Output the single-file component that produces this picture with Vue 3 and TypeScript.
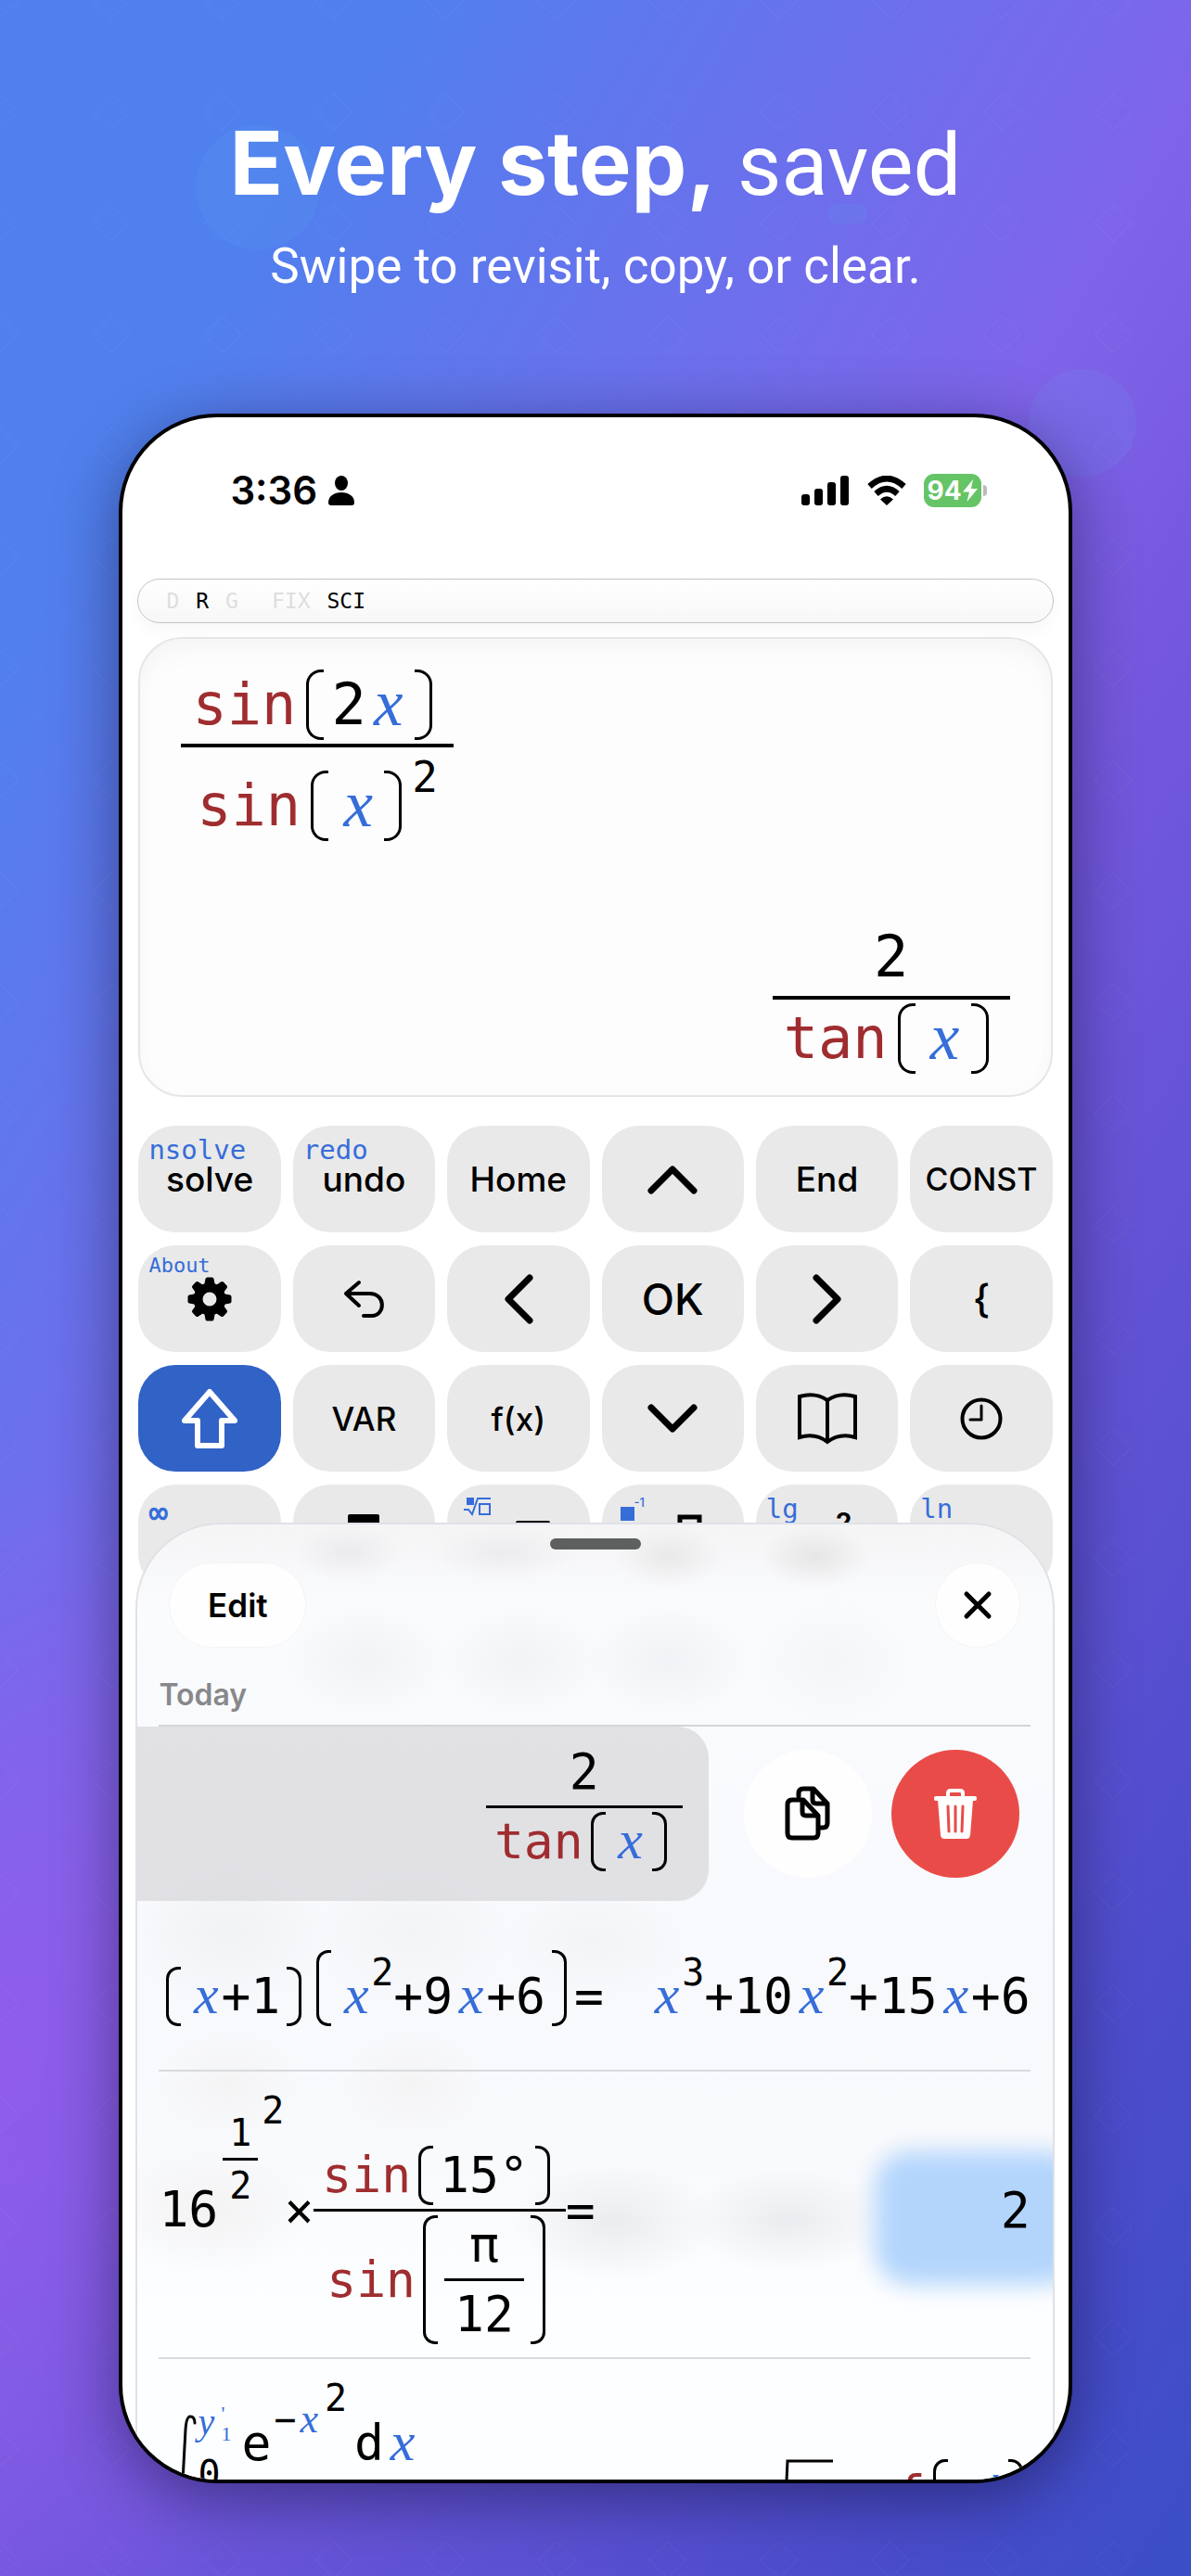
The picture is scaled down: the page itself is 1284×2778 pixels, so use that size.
<script setup lang="ts">
interface Key {
  label?: string
  icon?: string
  shift?: string
  shiftIcon?: string
  size?: 'sm' | 'md' | 'lg' | 'brace'
  shiftStyle?: 'small' | 'strong'
  active?: boolean
  name: string
}

const keys: Key[] = [
  { name: 'solve', label: 'solve', shift: 'nsolve' },
  { name: 'undo', label: 'undo', shift: 'redo' },
  { name: 'Home', label: 'Home' },
  { name: 'Up', icon: 'up' },
  { name: 'End', label: 'End' },
  { name: 'Constants', label: 'CONST', size: 'sm' },
  { name: 'Settings', icon: 'gear', shift: 'About', shiftStyle: 'small' },
  { name: 'Back', icon: 'back' },
  { name: 'Left', icon: 'left' },
  { name: 'OK', label: 'OK', size: 'lg' },
  { name: 'Right', icon: 'right' },
  { name: 'Brace', label: '{', size: 'brace' },
  { name: 'Shift', icon: 'shift', active: true },
  { name: 'Variables', label: 'VAR', size: 'md' },
  { name: 'Function', label: 'f(x)', size: 'md' },
  { name: 'Down', icon: 'down' },
  { name: 'Catalog', icon: 'book' },
  { name: 'History', icon: 'clock' },
  { name: 'Infinity', shift: '∞', shiftStyle: 'strong' },
  { name: 'Fraction', icon: 'fraction' },
  { name: 'Root', icon: 'root', shiftIcon: 'nroot' },
  { name: 'Power', icon: 'power', shiftIcon: 'inverse' },
  { name: 'Square', icon: 'square', shift: 'lg' },
  { name: 'Logarithm', shift: 'ln' },
]
</script>

<template>
  <main class="page">
    <svg class="pattern" aria-hidden="true">
      <defs>
        <pattern id="diamonds" width="120" height="120" patternUnits="userSpaceOnUse">
          <path d="M120 101L140 121L120 141M0 101L20 121M0 -19L20 1L0 20M120 -19L100 1L120 20M120 101L100 121" fill="none" stroke="#fff" stroke-opacity=".05" />
        </pattern>
      </defs>
      <rect width="100%" height="100%" fill="url(#diamonds)" />
      <circle cx="278" cy="202" r="67" fill="#5fa0f0" fill-opacity=".16" />
      <circle cx="1167" cy="456" r="58" fill="#6f90f0" fill-opacity=".18" />
      <rect x="893" y="220" width="42" height="21" rx="8" fill="#5f90f0" fill-opacity=".2" />
    </svg>

    <header class="hero">
      <h1><b>Every step,</b> saved</h1>
      <p>Swipe to revisit, copy, or clear.</p>
    </header>

    <section class="phone">
      <div class="status">
        <div class="time">
          <span>3:36</span>
          <svg width="30" height="32" viewBox="0 0 30 32"><ellipse cx="15" cy="8" rx="7" ry="8" /><path d="M1 29C1 22 7 18 15 18S29 22 29 29Q29 32 26 32H4Q1 32 1 29Z" /></svg>
        </div>
        <div class="signals">
          <svg width="52" height="32" viewBox="0 0 52 32"><rect x="0" y="20" width="9" height="12" rx="3" /><rect x="14" y="14" width="9" height="18" rx="3" /><rect x="28" y="7" width="9" height="25" rx="3" /><rect x="42" y="0" width="9" height="32" rx="3" /></svg>
          <svg width="44" height="32" viewBox="0 0 44 32"><path d="M3.500 11.500Q22 -5.500 40.500 11.500" fill="none" stroke="#000" stroke-width="6.500" /><path d="M10.500 19.500Q22 9 33.500 19.500" fill="none" stroke="#000" stroke-width="6.500" /><path d="M22 32L15 25.500Q22 19 29 25.500Z" /></svg>
          <div class="battery">
            <span>94</span>
            <svg width="16" height="24" viewBox="0 0 16 24"><path d="M11 0L0 13.500H7L4.500 24L16 10H9Z" fill="#fff" /></svg>
          </div>
        </div>
      </div>

      <div class="modes">
        <span class="off">D</span><span>R</span><span class="off">G</span><span class="off wide">FIX</span><span>SCI</span>
      </div>

      <div class="display">
        <div class="m big">
          <div class="frac">
            <div class="num row"><span class="fn">sin</span><i class="lp"></i><span>2</span><var>x</var><i class="rp"></i></div>
            <div class="bar"></div>
            <div class="den row"><span class="fn">sin</span><div class="row"><i class="lp"></i><var>x</var><i class="rp"></i></div><span class="sup">2</span></div>
          </div>
        </div>
        <div class="m big result">
          <div class="frac">
            <div class="num row"><span>2</span></div>
            <div class="bar"></div>
            <div class="den row"><span class="fn">tan</span><i class="lp"></i><var>x</var><i class="rp"></i></div>
          </div>
        </div>
      </div>

      <div class="keypad">
        <button v-for="k in keys" :key="k.name" type="button" class="key" :class="[k.size, { active: k.active }]" :aria-label="k.name">
          <span v-if="k.shift" class="shift" :class="k.shiftStyle">{{ k.shift }}</span>
          <svg v-if="k.shiftIcon === 'nroot'" class="shift-icon" width="30" height="20" viewBox="0 0 30 20"><rect x="3" y="0" width="8" height="8" fill="#366dd9" /><path d="M0 13H5L9 18L15 1H29" fill="none" stroke="#366dd9" stroke-width="2" /><rect x="17" y="7" width="11" height="11" fill="none" stroke="#366dd9" stroke-width="2" /></svg>
          <span v-if="k.shiftIcon === 'inverse'" class="inverse"><i></i><sup>-1</sup></span>
          <span v-if="k.label">{{ k.label }}</span>
          <svg v-if="k.icon === 'up'" width="54" height="32" viewBox="0 0 54 32"><path d="M4 28L27 5L50 28" class="ln w7" /></svg>
          <svg v-if="k.icon === 'down'" width="54" height="32" viewBox="0 0 54 32"><path d="M4 4L27 27L50 4" class="ln w7" /></svg>
          <svg v-if="k.icon === 'left'" width="32" height="54" viewBox="0 0 32 54"><path d="M28 4L5 27L28 50" class="ln w7" /></svg>
          <svg v-if="k.icon === 'right'" width="32" height="54" viewBox="0 0 32 54"><path d="M4 4L27 27L4 50" class="ln w7" /></svg>
          <svg v-if="k.icon === 'back'" width="44" height="42" viewBox="0 0 44 42"><path d="M17 3L3 15L17 28M3 15H28C47 15 45 39 31 39H22" class="ln w4" /></svg>
          <svg v-if="k.icon === 'gear'" width="48" height="48" viewBox="-24 -24 48 48">
            <path v-for="a in 8" :key="a" d="M-6 -14L-4.500 -22Q-4 -23.500 -2.500 -23.500H2.500Q4 -23.500 4.500 -22L6 -14Z" :transform="`rotate(${a * 45})`" />
            <circle r="12.500" fill="none" stroke="#000" stroke-width="10" />
          </svg>
          <svg v-if="k.icon === 'shift'" width="60" height="66" viewBox="0 0 60 66"><path d="M30 4L57 35H43V62H17V35H3Z" fill="none" stroke="#fff" stroke-width="6" stroke-linejoin="round" /></svg>
          <svg v-if="k.icon === 'book'" width="66" height="56" viewBox="0 0 66 56"><path d="M33 8Q20 -1 3 4V48Q20 43 33 53Q46 43 63 48V4Q46 -1 33 8V53" fill="none" stroke="#000" stroke-width="4" /></svg>
          <svg v-if="k.icon === 'clock'" width="46" height="46" viewBox="0 0 46 46"><circle cx="23" cy="23" r="20.500" fill="none" stroke="#000" stroke-width="4" /><path d="M23 9V24H11" class="ln w3" /></svg>
          <svg v-if="k.icon === 'fraction'" width="34" height="51" viewBox="0 0 34 51"><rect x="0" y="0" width="34" height="20" rx="2" /><path d="M0 26H34" stroke="#000" stroke-width="4" /><rect x="2" y="33" width="30" height="16" fill="none" stroke="#000" stroke-width="4" /></svg>
          <svg v-if="k.icon === 'root'" class="root" width="60" height="40" viewBox="0 0 60 40"><path d="M2 24L10 24L17 37L25 3H58" class="ln w4" /></svg>
          <svg v-if="k.icon === 'power'" width="70" height="54" viewBox="0 0 70 54"><rect x="3" y="22" width="30" height="30" /><rect x="43" y="4" width="21" height="22" fill="none" stroke="#000" stroke-width="5" /></svg>
          <span v-if="k.icon === 'square'" class="sq"><i></i><sup>2</sup></span>
        </button>
      </div>

      <section class="sheet" aria-label="History">
        <div class="glow" aria-hidden="true"></div>
        <div class="grabber"></div>
        <div class="tools">
          <button type="button" class="edit">Edit</button>
          <button type="button" class="close" aria-label="Close"><svg width="32" height="32" viewBox="0 0 32 32"><path d="M4 4L28 28M28 4L4 28" class="ln w5" /></svg></button>
        </div>
        <h2>Today</h2>

        <div class="swiped">
          <div class="m card">
            <div class="frac">
              <div class="num row"><span>2</span></div>
              <div class="bar"></div>
              <div class="den row"><span class="fn">tan</span><i class="lp"></i><var>x</var><i class="rp"></i></div>
            </div>
          </div>
          <button type="button" class="round copy" aria-label="Copy">
            <svg width="50" height="60" viewBox="0 0 50 60"><path d="M15 11V8Q15 3 20 3H31L46 19V40Q46 45 41 45H38M30 3V15Q30 19 34 19H46" class="ln w5" /><path d="M8 15H20L36 32V51Q36 56 31 56H8Q3 56 3 51V20Q3 15 8 15ZM19 15V28Q19 32 23 32H36" class="ln w5" /></svg>
          </button>
          <button type="button" class="round trash" aria-label="Delete">
            <svg width="48" height="56" viewBox="0 0 48 56"><path d="M16 10V6Q16 3 19 3H29Q32 3 32 6V10" fill="none" stroke="#fff" stroke-width="4" /><rect x="1" y="9" width="46" height="5" rx="2" fill="#fff" /><path d="M5 13H43L40 51Q39.500 55 36 55H12Q8.500 55 8 51Z" fill="#fff" /><path d="M16 20L17 47M24 20V47M32 20L31 47" stroke="#e94c48" stroke-width="3" stroke-linecap="round" fill="none" /></svg>
          </button>
        </div>

        <div class="m entry poly">
          <div class="row">
            <div class="row"><i class="lp"></i><var>x</var><span>+1</span><i class="rp"></i></div>
            <div class="row"><i class="lp"></i><var>x</var><span class="sup">2</span><span>+9</span><var>x</var><span>+6</span><i class="rp"></i></div>
            <span>=</span>
          </div>
          <div class="row"><var>x</var><span class="sup">3</span><span>+10</span><var>x</var><span class="sup">2</span><span>+15</span><var>x</var><span>+6</span></div>
        </div>

        <div class="m entry trig">
          <div class="row mid">
            <div class="power">
              <span>16</span>
              <div class="exp">
                <div class="frac tiny"><div class="num">1</div><div class="bar"></div><div class="den">2</div></div>
                <span class="top">2</span>
              </div>
            </div>
            <span>×</span>
            <div class="frac">
              <div class="num row"><span class="fn">sin</span><i class="lp"></i><span>15°</span><i class="rp"></i></div>
              <div class="bar"></div>
              <div class="den row mid"><span class="fn">sin</span><i class="lp"></i><div class="frac inner"><div class="num">π</div><div class="bar"></div><div class="den">12</div></div><i class="rp"></i></div>
            </div>
            <span>=</span>
          </div>
          <div class="row"><span>2</span></div>
        </div>

        <div class="m entry integral">
          <div class="row top-row">
            <svg class="int" width="28" height="124" viewBox="0 0 28 124"><path d="M25 9Q25 2 20 2Q16 2 15 16L11 90Q9 120 2 120" class="ln w3" /></svg>
            <div class="bounds"><span class="ub"><em>y</em><span class="marks"><small>'</small><small>1</small></span></span><span>0</span></div>
            <span class="drop">e</span>
            <span class="expo">−<em>x</em></span><span class="expo2">2</span>
            <span class="drop">d</span><var class="drop">x</var>
          </div>
          <div class="row erf">
            <svg width="70" height="70" viewBox="0 0 70 70"><path d="M2 45L8 42L14 66L17 2H66" fill="none" stroke="#000" stroke-width="3" /></svg>
            <span class="fn">erf</span><i class="lp"></i><var>y'</var><i class="rp"></i>
          </div>
        </div>
      </section>
    </section>
  </main>
</template>

<style>
body { margin: 0; }
</style>

<style scoped>
* { box-sizing: border-box; }
.page {
  position: relative;
  display: flex;
  flex-direction: column;
  height: 100vh;
  min-height: 1800px;
  padding: 0 10% 100px;
  overflow: hidden;
  color: #000;
  font-family: Inter, "Liberation Sans", sans-serif;
  background:
    radial-gradient(420px 640px at 0 80%, rgba(146, 91, 234, .85), rgba(146, 91, 234, 0)),
    linear-gradient(121deg, #5080ee 0%, #5080ee 14%, #7f64ea 46%, #7558de 56%, #4a4ccb 88%, #3b4ec8 100%);
}
.pattern { position: absolute; inset: 0; width: 100%; height: 100%; }
.hero { position: relative; color: #fff; text-align: center; height: 446px; padding-top: 120px; flex: none; }
h1 { margin: 0; font: 400 92px/112px Roboto, sans-serif; white-space: nowrap; }
h1 b { font: 700 95px/112px Inter, sans-serif; }
.hero p { margin: 16px 0 0; font: 400 53px/72px Roboto, sans-serif; white-space: nowrap; }

.phone {
  position: relative;
  flex: 1;
  min-height: 0;
  overflow: hidden;
  border: 4px solid #000;
  border-radius: 106px;
  background: #fff;
  box-shadow: 0 16px 70px rgba(0, 0, 20, .42);
  padding: 0 16px 0 14px;
}
.status { display: flex; justify-content: space-between; align-items: center; height: 158px; padding: 0 78px 0 102px; }
.time { display: flex; align-items: center; gap: 11px; font-size: 42px; line-height: 52px; font-weight: 600; }
.signals { display: flex; align-items: center; gap: 18px; }
.battery { position: relative; display: flex; align-items: center; justify-content: center; gap: 1px; width: 62px; height: 36px; border-radius: 11px; background: #65c466; color: #fff; font-size: 28px; line-height: 36px; font-weight: 700; }
.battery::after { content: ""; position: absolute; left: 64px; top: 12px; width: 4px; height: 12px; border-radius: 0 4px 4px 0; background: #bbb; }

.modes {
  display: flex;
  align-items: center;
  gap: 18px;
  height: 48px;
  margin: 16px 0 0 2px;
  padding-left: 30px;
  border: 1px solid #c4c4c4;
  border-radius: 24px;
  background: linear-gradient(#fff, #f7f7f7);
  box-shadow: 0 8px 18px rgba(0, 0, 0, .03);
  font: 23px/30px "DejaVu Sans Mono", monospace;
}
.modes .off { color: #dedede; }
.modes .wide { margin-left: 18px; }

.display {
  display: flex;
  flex-direction: column;
  justify-content: space-between;
  height: 496px;
  margin: 15px 1px 0 3px;
  padding: 33px 44px 23px;
  border: 2px solid #e6e6e6;
  border-radius: 48px;
  background: #fdfdfd;
  box-shadow: inset 0 18px 36px -12px rgba(0, 0, 0, .04), inset 0 0 26px rgba(0, 0, 0, .015);
}
.result { align-self: flex-end; }

.m {
  --fs: 53px; --lh: 64px; --vfs: 60px; --vlh: 68px; --pw: 16px; --out: 8px; --in: 7px; --x: 36px; --bar: 3px; --pad: 9px; --r: 13px;
  --sfs: 40px; --slh: 48px; --sm: 34px;
  display: flex;
  font-family: "DejaVu Sans Mono", monospace;
  font-size: var(--fs);
  line-height: var(--lh);
  white-space: nowrap;
}
.big { --fs: 62px; --lh: 76px; --vfs: 71px; --vlh: 80px; --pw: 19px; --out: 11px; --in: 8px; --x: 44px; --bar: 4px; --pad: 12px; --r: 16px; --sfs: 46px; --slh: 56px; --sm: 41px; }
.row { display: flex; align-items: flex-end; }
.row.mid { align-items: center; }
.fn { color: #9f2d30; }
.m var, .m em { color: #366dd9; font-family: "Liberation Serif", serif; font-style: italic; }
.m var { width: var(--x); margin-top: -4px; padding-left: 4px; font-size: var(--vfs); line-height: var(--vlh); text-align: center; }
.lp, .rp { align-self: stretch; flex: none; width: var(--pw); min-height: var(--lh); border: 3px solid #000; }
.lp { border-right: 0; border-radius: var(--r) 0 0 var(--r); margin: 0 var(--in) 0 var(--out); }
.rp { border-left: 0; border-radius: 0 var(--r) var(--r) 0; margin: 0 var(--out) 0 var(--in); }
.frac { display: grid; grid-template-rows: 1fr auto 1fr; justify-items: center; }
.big .frac { grid-template-rows: auto auto auto; }
.num { align-self: end; }
.frac > .row { padding: 0 var(--pad); }
.frac > .bar { justify-self: stretch; height: var(--bar); margin: 4px 0; background: #000; }
.sup { font-size: var(--sfs); line-height: var(--slh); margin-bottom: var(--sm); }

.keypad { display: grid; grid-template-columns: repeat(6, 1fr); gap: 14px 13px; margin: 31px 1px 0 3px; }
.key {
  position: relative;
  display: flex;
  align-items: center;
  justify-content: center;
  height: 115px;
  padding: 0;
  border: 0;
  border-radius: 40px;
  background: #e9e9e9;
  color: #000;
  font: 500 37px/44px Inter, sans-serif;
}
.key.sm { font-size: 34px; }
.key.md { font-size: 35px; }
.key.lg { font-size: 46px; }
.key.brace { font-size: 42px; }
.key.active { background: #3162c6; }
.shift { position: absolute; left: 11px; top: 8px; color: #366dd9; font: 29px/36px "DejaVu Sans Mono", monospace; }
.shift.small { font-size: 22px; line-height: 28px; }
.shift.strong { top: 12px; font-size: 34px; font-weight: 700; }
.shift-icon { position: absolute; left: 18px; top: 14px; }
.inverse { position: absolute; left: 20px; top: 13px; display: flex; align-items: flex-end; height: 26px; }
.inverse i { width: 15px; height: 15px; background: #366dd9; }
.inverse sup { align-self: flex-start; color: #366dd9; font-size: 13px; line-height: 12px; }
.root { margin-left: 8px; }
.sq { display: flex; height: 62px; align-items: flex-end; gap: 8px; }
.sq i { width: 28px; height: 30px; background: #000; }
.sq sup { align-self: flex-start; font-size: 28px; line-height: 28px; font-weight: 700; }
.ln { fill: none; stroke: #000; stroke-linecap: round; stroke-linejoin: round; }
.w7 { stroke-width: 7px; }
.w5 { stroke-width: 5px; }
.w4 { stroke-width: 4px; }
.w3 { stroke-width: 3px; }

.sheet {
  position: relative;
  margin: -74px -1px 0 0;
  height: 1300px;
  overflow: hidden;
  border: 2px solid #dfe2e6;
  border-radius: 92px 92px 0 0;
  background:
    radial-gradient(60px 30px at 23% 30px, #ebebed, transparent),
    radial-gradient(80px 30px at 40% 30px, #ececee, transparent),
    radial-gradient(60px 34px at 58% 34px, #e9e9ea, transparent),
    radial-gradient(60px 34px at 74% 34px, #e6e6e7, transparent),
    radial-gradient(90px 60px at 25% 146px, #f2f3f5, transparent),
    radial-gradient(90px 60px at 42% 146px, #f2f3f5, transparent),
    radial-gradient(90px 60px at 58% 146px, #f1f2f5, transparent),
    radial-gradient(90px 70px at 76% 146px, #f5f6f8, transparent),
    radial-gradient(110px 80px at 10% 440px, #f1f2f3, transparent),
    radial-gradient(110px 80px at 30% 440px, #f3f4f5, transparent),
    radial-gradient(100px 60px at 50% 450px, #f3f4f5, transparent),
    radial-gradient(80px 60px at 10% 604px, #f4f4f5, transparent),
    radial-gradient(80px 60px at 30% 604px, #f4f4f5, transparent),
    radial-gradient(110px 70px at 8% 740px, #f3f3f4, transparent),
    radial-gradient(110px 64px at 52% 752px, #ebecee, transparent),
    radial-gradient(110px 56px at 71% 750px, #ebecef, transparent),
    linear-gradient(#f5f5f6, #fafbfd 90px, #f8f9fd 500px, #f9fafc 700px, #fdfeff 850px);
}
.glow { position: absolute; right: -30px; top: 676px; width: 222px; height: 144px; border-radius: 38px; background: #b3d5fc; filter: blur(12px); }
.grabber { width: 98px; height: 12px; margin: 15px auto 0; border-radius: 6px; background: #5e5f5f; }
.tools { display: flex; justify-content: space-between; margin: 14px 35px 0 34px; }
.edit, .close { height: 92px; padding: 0; border: 1px solid #f3f4f6; border-radius: 46px; background: #fefefe; color: #000; font: 600 35px/44px Inter, sans-serif; }
.edit { width: 148px; }
.close { width: 92px; display: flex; align-items: center; justify-content: center; }
h2 { margin: 31px 24px 0 23px; padding-bottom: 12px; border-bottom: 2px solid #d3d5d8; color: #87888b; font-size: 32px; line-height: 40px; font-weight: 600; }
.swiped { display: flex; align-items: center; height: 188px; padding-right: 36px; }
.card { flex: 1; justify-content: flex-end; height: 188px; padding: 17px 28px 35px 0; border-radius: 0 34px 34px 0; background: rgba(210, 210, 213, .62); }
.round { display: flex; align-items: center; justify-content: center; flex: none; width: 138px; height: 138px; border: 0; border-radius: 50%; }
.copy { margin: 0 21px 0 38px; background: #fefefe; }
.trash { background: #e94c48; }
.entry { position: relative; justify-content: space-between; align-items: center; margin: 0 24px 0 23px; border-bottom: 2px solid #d8dadd; }
.poly { height: 184px; padding-top: 6px; }
.trig { height: 310px; padding-bottom: 9px; }
.power { display: flex; align-items: flex-end; padding-bottom: 100px; }
.exp { display: flex; align-items: flex-start; margin-bottom: 34px; font-size: 40px; line-height: 48px; }
.tiny { margin-top: 24px; padding-left: 5px; }
.frac.tiny > .bar { margin: 3px 0; }
.tiny .num, .tiny .den { padding: 0 7px; }
.top { margin-left: 4px; }
.inner .num, .inner .den { padding: 0 11px; }
.integral { border: 0; height: 240px; align-items: flex-start; }
.top-row { align-items: flex-start; padding-top: 18px; }
.int { margin: 42px 0 0 14px; }
.bounds { display: flex; flex-direction: column; gap: 8px; width: 47px; margin-top: 30px; font-size: 40px; line-height: 40px; }
.ub { display: flex; }
.bounds > span + span { line-height: 48px; }
.bounds em { width: 25px; }
.marks { display: flex; flex-direction: column; }
.marks small { color: #366dd9; font: 22px/22px "Liberation Serif", serif; }
.drop { margin-top: 41px; }
.m var.drop { margin-top: 37px; }
.expo { margin-top: 23px; padding: 0 3px; font-size: 40px; line-height: 48px; }
.expo em { padding: 0 4px; font-size: 44px; }
.expo2 { padding-right: 8px; font-size: 40px; line-height: 48px; }
.erf { margin-top: 108px; }
.m .erf var { width: 51px; }
</style>
